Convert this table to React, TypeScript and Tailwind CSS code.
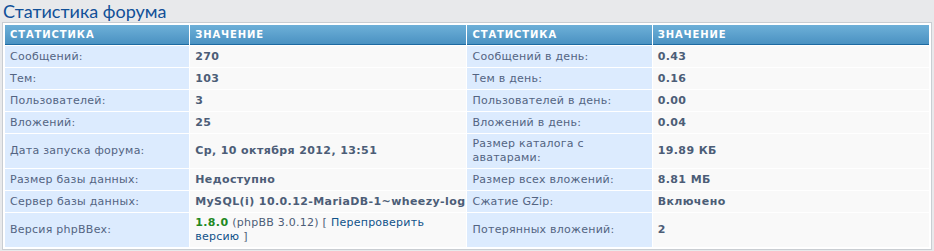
import React from "react";

type Row = {
  label: string;
  value: React.ReactNode;
  label2: string;
  value2: React.ReactNode;
  tall?: boolean;
};

const rows: Row[] = [
  { label: "Сообщений:", value: "270", label2: "Сообщений в день:", value2: "0.43" },
  { label: "Тем:", value: "103", label2: "Тем в день:", value2: "0.16" },
  { label: "Пользователей:", value: "3", label2: "Пользователей в день:", value2: "0.00" },
  { label: "Вложений:", value: "25", label2: "Вложений в день:", value2: "0.04" },
  {
    label: "Дата запуска форума:",
    value: "Ср, 10 октября 2012, 13:51",
    label2: "Размер каталога с аватарами:",
    value2: "19.89 КБ",
    tall: true,
  },
  { label: "Размер базы данных:", value: "Недоступно", label2: "Размер всех вложений:", value2: "8.81 МБ" },
  {
    label: "Сервер базы данных:",
    value: <span className="whitespace-nowrap">MySQL(i) 10.0.12-MariaDB-1~wheezy-log</span>,
    label2: "Сжатие GZip:",
    value2: "Включено",
  },
  {
    label: "Версия phpBBex:",
    value: (
      <span className="font-normal tracking-[0.25px]">
        <strong className="font-bold tracking-[0.4px] text-[#228822]">1.8.0</strong> (phpBB 3.0.12) [{" "}
        <a className="text-[#105289]">Перепроверить версию</a> ]
      </span>
    ),
    label2: "Потерянных вложений:",
    value2: "2",
    tall: true,
  },
];

const labelCell = "bg-[#dcebfe] px-[5px] align-middle tracking-[0.25px] text-[#536482]";
const valueCell = "bg-[#f9f9f9] px-[5px] align-middle font-bold tracking-[0.4px] text-[#4c5d77]";
const headCell =
  "h-[20px] border-b border-[#1d6aa1] bg-gradient-to-b from-[#6eb0d8] to-[#4a92c2] px-[5px] text-left text-[10px] font-bold uppercase tracking-[0.9px] text-white";

export default function App() {
  return (
    <div className="h-[251px] w-[934px] overflow-hidden bg-[#e8e9eb] font-['DejaVu_Sans',Verdana,sans-serif] text-[11px] leading-[14px]">
      <h2 className="h-[22px] pl-[3px] pt-[1px] font-['Lato',sans-serif] text-[18px] leading-[20px] font-normal text-[#115098]">
        Статистика форума
      </h2>
      <div className="ml-[2px] w-[930px] border border-[#c9cdd2] bg-white p-px">
        <table className="w-full table-fixed border-separate border-spacing-px">
          <colgroup>
            <col className="w-[20%]" />
            <col className="w-[30%]" />
            <col className="w-[20%]" />
            <col className="w-[30%]" />
          </colgroup>
          <thead>
            <tr>
              <th className={headCell}>Статистика</th>
              <th className={headCell}>Значение</th>
              <th className={headCell}>Статистика</th>
              <th className={headCell}>Значение</th>
            </tr>
          </thead>
          <tbody>
            {rows.map((r) => (
              <tr key={r.label} className={r.tall ? "h-[34px]" : "h-[21px]"}>
                <td className={labelCell}>{r.label}</td>
                <td className={valueCell}>{r.value}</td>
                <td className={labelCell}>{r.label2}</td>
                <td className={valueCell}>{r.value2}</td>
              </tr>
            ))}
          </tbody>
        </table>
      </div>
    </div>
  );
}
